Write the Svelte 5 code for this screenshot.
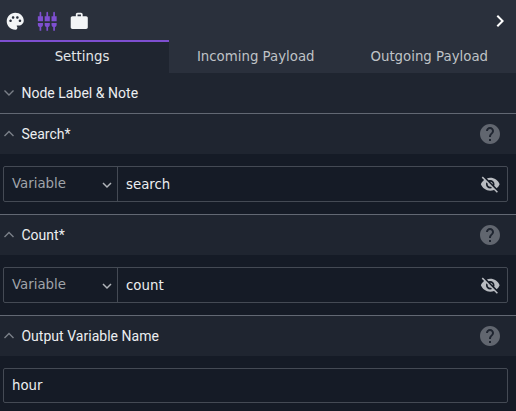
<script>
  const tabs = ['Settings', 'Incoming Payload', 'Outgoing Payload'];
  let active = $state(0);
  const fields = [
    { title: 'Search*', value: 'search', variable: true },
    { title: 'Count*', value: 'count', variable: true },
    { title: 'Output Variable Name', value: 'hour', variable: false }
  ];
</script>

<div class="panel">
  <header class="toolbar">
    <svg class="tool" viewBox="0 0 24 24"><path d="M12 2C6.49 2 2 6.49 2 12s4.49 10 10 10c1.38 0 2.5-1.12 2.5-2.5 0-.61-.23-1.2-.64-1.67-.08-.1-.13-.21-.13-.33 0-.28.22-.5.5-.5H16c3.31 0 6-2.69 6-6 0-4.96-4.49-9-10-9zm5.5 11c-.83 0-1.5-.67-1.5-1.5s.67-1.5 1.5-1.5 1.5.67 1.5 1.5-.67 1.5-1.5 1.5zm-3-4c-.83 0-1.5-.67-1.5-1.5S13.67 6 14.5 6s1.500.67 1.500 1.500S15.330 9 14.500 9zM5 11.500c0-.83.67-1.500 1.500-1.500s1.500.67 1.500 1.500S7.330 13 6.500 13 5 12.330 5 11.500zm6-4C11 8.330 10.330 9 9.500 9S8 8.330 8 7.500 8.670 6 9.500 6s1.500.67 1.500 1.500z" /></svg>
    <svg class="tool current" viewBox="0 0 24 24"><path d="M5 2c0-.55-.45-1-1-1s-1 .45-1 1v4H1v6h6V6H5V2zm4 14c0 1.300.84 2.400 2 2.820V23h2v-4.180c1.160-.41 2-1.510 2-2.820v-2H9v2zm-8 0c0 1.300.84 2.400 2 2.820V23h2v-4.180C6.160 18.400 7 17.300 7 16v-2H1v2zM21 6V2c0-.55-.45-1-1-1s-1 .45-1 1v4h-2v6h6V6h-2zm-8-4c0-.55-.45-1-1-1s-1 .45-1 1v4H9v6h6V6h-2V2zm4 14c0 1.300.84 2.400 2 2.820V23h2v-4.180c1.160-.41 2-1.510 2-2.820v-2h-6v2z" /></svg>
    <svg class="tool" viewBox="0 0 24 24"><path d="M20 6h-4V4c0-1.110-.89-2-2-2h-4c-1.110 0-2 .89-2 2v2H4c-1.110 0-1.990.89-1.990 2L2 19c0 1.110.89 2 2 2h16c1.110 0 2-.89 2-2V8c0-1.110-.89-2-2-2zm-6 0h-4V4h4v2z" /></svg>
    <svg class="collapse" viewBox="0 0 24 24"><path d="M10 6 8.590 7.410 13.170 12l-4.580 4.590L10 18l6-6z" /></svg>
  </header>

  <nav>
    {#each tabs as tab, i}
      <button class:active={active === i} onclick={() => (active = i)}>{tab}</button>
    {/each}
  </nav>

  <section>
    <div class="heading">
      <svg class="toggle" viewBox="0 0 12 12"><path d="m1.500 3.500 4.500 4.500 4.500-4.500" /></svg>
      <h2>Node Label &amp; Note</h2>
    </div>
  </section>

  {#each fields as field}
    <section class="ruled">
      <div class="heading">
        <svg class="toggle" viewBox="0 0 12 12"><path d="m1.500 8 4.500-4.500 4.500 4.500" /></svg>
        <h2>{field.title}</h2>
        <svg class="help" viewBox="0 0 24 24"><path d="M12 2C6.480 2 2 6.480 2 12s4.480 10 10 10 10-4.480 10-10S17.520 2 12 2zm1 17h-2v-2h2v2zm2.070-7.750-.9.920C13.450 12.900 13 13.500 13 15h-2v-.5c0-1.100.45-2.100 1.170-2.830l1.240-1.260c.37-.36.59-.86.59-1.410 0-1.100-.9-2-2-2s-2 .9-2 2H8c0-2.210 1.790-4 4-4s4 1.790 4 4c0 .88-.36 1.680-.93 2.250z" /></svg>
      </div>
      <div class="body">
        <div class="field" class:single={!field.variable}>
          {#if field.variable}
            <div class="kind">
              <span>Variable</span>
              <svg viewBox="0 0 12 12"><path d="m2 4 4 4 4-4" /></svg>
            </div>
          {/if}
          <span class="value">{field.value}</span>
          {#if field.variable}
            <svg class="hide" viewBox="0 0 24 24"><path d="M12 7c2.760 0 5 2.240 5 5 0 .65-.13 1.260-.36 1.830l2.920 2.920c1.510-1.260 2.700-2.890 3.430-4.750-1.730-4.390-6-7.500-11-7.500-1.400 0-2.740.25-3.980.7l2.160 2.160C10.740 7.130 11.350 7 12 7zM2 4.270l2.280 2.280.46.46C3.080 8.300 1.780 10.020 1 12c1.730 4.390 6 7.500 11 7.500 1.550 0 3.030-.3 4.380-.84l.42.42L19.730 22 21 20.730 3.270 3 2 4.270zM7.530 9.800l1.550 1.550c-.05.21-.08.43-.08.65 0 1.660 1.340 3 3 3 .22 0 .44-.03.65-.08l1.550 1.550c-.67.33-1.410.53-2.200.53-2.760 0-5-2.240-5-5 0-.79.2-1.530.53-2.200zm4.310-.78 3.150 3.150.02-.16c0-1.660-1.340-3-3-3l-.17.01z" /></svg>
          {/if}
        </div>
      </div>
    </section>
  {/each}
</div>

<style>
  :global(body) { background: #151b26; }
  .panel {
    height: 411px;
    overflow: hidden;
    background: #151b26;
    color: #eceef0;
    font: 13.333px/20px "DejaVu Sans", sans-serif;
  }
  svg { display: block; flex: none; fill: currentColor; }
  .toolbar {
    display: flex;
    align-items: center;
    gap: 11.7px;
    height: 40px;
    padding: 2px 4px 0 5px;
    box-sizing: border-box;
    background: #2a303c;
    color: #f2f4f6;
  }
  .tool { width: 20.5px; height: 20.5px; }
  .current { color: #7e4fd0; }
  .collapse { width: 24px; height: 24px; margin-left: auto; color: #fff; }
  nav { display: flex; height: 33px; background: #2a303c; }
  button {
    flex: 1 1 0;
    margin: 0;
    padding: 0 0 2px;
    border: 0;
    border-top: 2px solid transparent;
    background: none;
    color: #bfc2c6;
    font: inherit;
  }
  button:first-child { flex: 0 0 169px; padding-right: 5px; }
  button.active { border-color: #7e4fd0; background: #1f2530; color: #e3e5e8; }
  .ruled { border-top: 1px solid #626873; }
  .heading {
    display: flex;
    align-items: center;
    height: 40px;
    padding: 0 14px 0 3px;
    background: #1f2530;
  }
  .toggle { width: 12px; height: 12px; fill: none; stroke: #7b8088; stroke-width: 1.4; }
  h2 { margin: 0 0 0 6.4px; font: 400 14px/20px Roboto, sans-serif; letter-spacing: 0.03px; }
  .help { width: 24px; height: 24px; margin-left: auto; color: #61666f; }
  .body { padding: 12px 8px 12px 3px; }
  .field {
    display: flex;
    align-items: center;
    height: 36px;
    box-sizing: border-box;
    border: 1px solid #444a54;
    border-radius: 2px;
  }
  .single { height: 35px; }
  .kind {
    display: flex;
    justify-content: space-between;
    align-items: center;
    width: 114px;
    height: 100%;
    padding: 0 4px 0 8px;
    box-sizing: border-box;
    border-right: 1px solid #444a54;
    color: #a0a4aa;
  }
  .kind span { padding-bottom: 1px; }
  .kind svg { width: 12px; height: 12px; margin-top: 2px; fill: none; stroke: #b0b4b9; stroke-width: 1.5; }
  .value { flex: 1; padding-left: 8px; }
  .kind + .value { padding-top: 1px; }
  .hide { width: 20.5px; height: 20.5px; margin: 1px 6.2px 0 0; color: #b9bcc1; }
</style>
